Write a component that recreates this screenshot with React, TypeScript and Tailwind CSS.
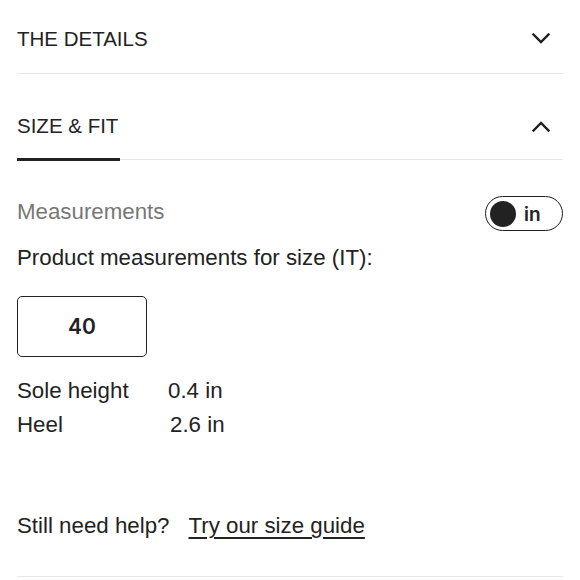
import React from "react";

function Chevron({ up }: { up?: boolean }) {
  return (
    <svg width="20" height="12" viewBox="0 0 20 12" fill="none" className="mr-[12px]">
      <polyline
        points={up ? "2.5,10.5 10,3 17.5,10.5" : "2.5,1.5 10,9 17.5,1.5"}
        stroke="#1f1f1f"
        strokeWidth="2.4"
        strokeLinecap="square"
        strokeLinejoin="miter"
      />
    </svg>
  );
}

export default function App() {
  return (
    <div
      className="w-[580px] h-[580px] bg-white px-[17px] overflow-hidden text-[#222222]"
      style={{ fontFamily: '"Liberation Sans", Arial, sans-serif' }}
    >
      {/* THE DETAILS */}
      <div className="h-[74px] flex items-center justify-between border-b border-[#e6e6e6] pt-[5px]">
        <span className="text-[20.5px] leading-[24px]">THE DETAILS</span>
        <Chevron />
      </div>

      {/* SIZE & FIT */}
      <div className="flex items-center justify-between pt-[40px] pb-[20px]">
        <span className="text-[20.5px] leading-[24px]">SIZE &amp; FIT</span>
        <Chevron up />
      </div>
      <div className="flex items-center h-[3px]">
        <div className="w-[103px] h-[3px] bg-[#222222]" />
        <div className="flex-1 h-px bg-[#e6e6e6]" />
      </div>

      {/* Measurements */}
      <div className="mt-[35px] flex items-center justify-between">
        <span className="text-[22.3px] leading-[26px] text-[#777777] mb-[4px]">Measurements</span>
        <div className="w-[78px] h-[35px] rounded-full border-[1.5px] border-[#1f1f1f] flex items-center pl-[4px] gap-[8px]">
          <div className="w-[26px] h-[26px] rounded-full bg-[#222222]" />
          <span
            className="text-[19px] font-semibold leading-none mt-[2px]"
            style={{ fontFamily: 'Inter, "Liberation Sans", sans-serif' }}
          >
            in
          </span>
        </div>
      </div>

      <div className="mt-[14px] text-[22.3px] leading-[26px]">Product measurements for size (IT):</div>

      <div className="mt-[25px] w-[130px] h-[61px] border border-[#222222] rounded-[5px] flex items-center justify-center">
        <span
          className="text-[21px] font-semibold"
          style={{ fontFamily: 'Inter, "Liberation Sans", sans-serif' }}
        >
          40
        </span>
      </div>

      <div className="mt-[17px] grid grid-cols-[151px_1fr] text-[22.3px] leading-[34px]">
        <span>Sole height</span>
        <span>0.4 in</span>
        <span>Heel</span>
        <span className="pl-[2px]">2.6 in</span>
      </div>

      <div className="mt-[71px] flex items-center gap-[19px] text-[22.3px] leading-[26px]">
        <span>Still need help?</span>
        <a href="#" className="underline underline-offset-[4px] decoration-[1.5px]">
          Try our size guide
        </a>
      </div>

      <div className="mt-[37px] h-px bg-[#e6e6e6]" />
    </div>
  );
}
